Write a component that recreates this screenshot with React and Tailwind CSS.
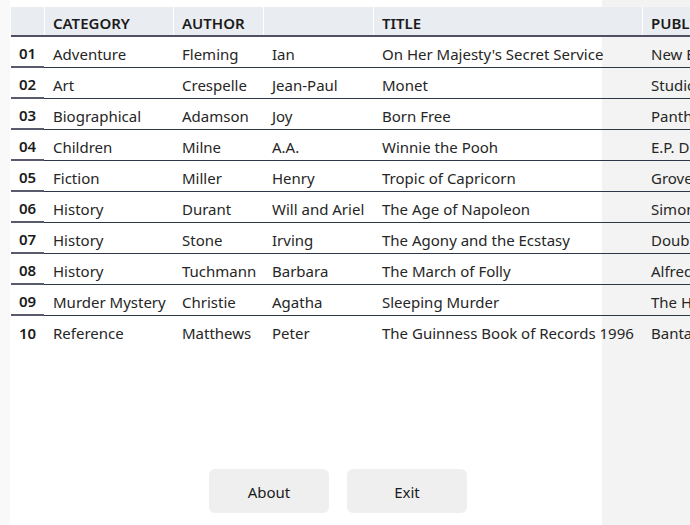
import React from "react";

const rows = [
  ["01", "Adventure", "Fleming", "Ian", "On Her Majesty's Secret Service", "New English Library"],
  ["02", "Art", "Crespelle", "Jean-Paul", "Monet", "Studio Vista"],
  ["03", "Biographical", "Adamson", "Joy", "Born Free", "Pantheon"],
  ["04", "Children", "Milne", "A.A.", "Winnie the Pooh", "E.P. Dutton"],
  ["05", "Fiction", "Miller", "Henry", "Tropic of Capricorn", "Grove Press"],
  ["06", "History", "Durant", "Will and Ariel", "The Age of Napoleon", "Simon and Schuster"],
  ["07", "History", "Stone", "Irving", "The Agony and the Ecstasy", "Doubleday"],
  ["08", "History", "Tuchmann", "Barbara", "The March of Folly", "Alfred A. Knopf"],
  ["09", "Murder Mystery", "Christie", "Agatha", "Sleeping Murder", "The Hamlyn Group"],
  ["10", "Reference", "Matthews", "Peter", "The Guinness Book of Records 1996", "Bantam Books"],
];

const widths = ["w-[129px]", "w-[90px]", "w-[110px]", "w-[269px]", "w-[200px]"];

export default function App() {
  return (
    <div
      className="w-[690px] h-[525px] overflow-hidden flex flex-col bg-[linear-gradient(to_right,#f9f9f9_10px,#ffffff_10px,#ffffff_602px,#f3f3f3_602px)] text-[15px] text-[#262626]"
      style={{ fontFamily: '"Noto Sans", "Open Sans", sans-serif' }}
    >
      <div className="ml-[11px] mt-[7px] flex flex-col">
        <div className="flex h-[30px] bg-[#e9ecf1] border-b-2 border-[#505064] font-semibold text-[#1b1b1b] whitespace-nowrap">
          <div className="w-[33px] shrink-0" />
          {["CATEGORY", "AUTHOR", "", "TITLE", "PUBLISHER"].map((h, i) => (
            <div
              key={i}
              className={`${widths[i]} shrink-0 border-l border-white pl-[8px] pt-[4px] flex items-center`}
            >
              {h}
            </div>
          ))}
        </div>
        {rows.map((r, ri) => (
          <div key={ri} className="flex h-[31px] whitespace-nowrap">
            <div
              className={`w-[33px] shrink-0 pl-[8px] pt-[4px] flex items-center font-semibold text-[#1b1b1b] ${
                ri < 9 ? "border-b-2 border-[#5a5a6e]" : ""
              }`}
            >
              {r[0]}
            </div>
            <div className={`flex flex-1 ${ri < 9 ? "border-b border-[#2e3746]" : ""}`}>
              {r.slice(1).map((c, ci) => (
                <div key={ci} className={`${widths[ci]} shrink-0 pl-[9px] pt-[4px] flex items-center`}>
                  {c}
                </div>
              ))}
            </div>
          </div>
        ))}
      </div>
      <div className="flex-1" />
      <div className="flex justify-center gap-[18px] pr-[14px] mb-[12px]">
        <button className="w-[120px] h-[44px] rounded-[6px] bg-[#efefef] text-[#1b1b1b] pt-[2px]">About</button>
        <button className="w-[120px] h-[44px] rounded-[6px] bg-[#efefef] text-[#1b1b1b] pt-[2px]">Exit</button>
      </div>
    </div>
  );
}
